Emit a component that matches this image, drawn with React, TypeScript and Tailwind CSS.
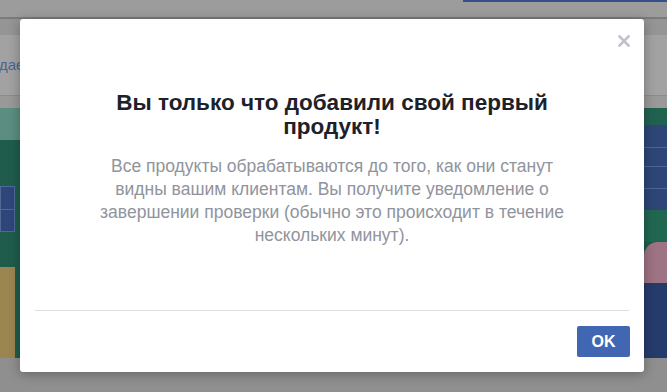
import React from "react";

const font = { fontFamily: '"Liberation Sans", Arial, sans-serif' };

function CloseIcon() {
  return (
    <svg width="12" height="12" viewBox="0 0 12 12" fill="none">
      <path d="M1.5 1.5l9 9M10.5 1.5l-9 9" stroke="#bec2c9" strokeWidth="2.6" strokeLinecap="square" />
    </svg>
  );
}

export default function App() {
  return (
    <div className="relative w-[667px] h-[392px] overflow-hidden bg-[#8f8f8f]" style={font}>
      {/* dimmed page behind the dialog */}
      <div className="flex flex-col">
        <div className="flex h-[17px] bg-[#9c9c9c]">
          <div className="w-[463px]" />
          <div className="flex-1 border-t-2 border-[#34518d]" />
        </div>
        <div className="h-[2px] bg-[#7b7b7b]" />
        <div className="h-[16px] bg-[#959595]" />
        <div className="h-[60px] bg-[#a2a2a2] flex items-center">
          <span className="-ml-[1px] text-[15px] text-[#4b6494] whitespace-nowrap">дает</span>
        </div>
        <div className="h-px bg-[#8c8c8c]" />
        <div className="h-[12px] bg-[#999999]" />

        <div className="flex h-[250px] bg-[#1f5c4c]">
          {/* left strip */}
          <div className="w-[20px] flex flex-col">
            <div className="h-[32px] bg-[#5b8e80]" />
            <div className="h-[46px]" />
            <div className="flex h-[46px]">
              <div className="w-[15px] bg-[#2e4679] border border-[#4e6898] flex flex-col">
                <div className="flex-1" />
                <div className="h-px bg-[#4e6898]" />
                <div className="flex-1" />
              </div>
            </div>
            <div className="h-[35px]" />
            <div className="flex h-[91px]">
              <div className="w-[15px] bg-[#9b8652]" />
            </div>
          </div>

          <div className="flex-1 bg-[#2a4a6a]" />

          {/* right strip */}
          <div className="w-[23px] flex flex-col">
            <div className="h-[17px] bg-[#216150]" />
            <div className="h-[85px] bg-[#2d4677] flex flex-col">
              <div className="h-[22px]" />
              <div className="h-px bg-[#4d6799]" />
              <div className="h-[18px]" />
              <div className="h-px bg-[#4d6799]" />
              <div className="h-[21px]" />
              <div className="h-px bg-[#4d6799]" />
            </div>
            <div className="h-[32px] bg-[#216650]" />
            <div className="h-[41px] bg-[#9e7383] rounded-tl-[14px]" />
            <div className="h-[75px] bg-[#253b6b]" />
          </div>
        </div>
      </div>

      {/* dialog */}
      <div className="absolute left-[20px] top-[19px] w-[624px] h-[353px] bg-white rounded-[3px] shadow-[0_2px_12px_rgba(0,0,0,0.3)] flex flex-col">
        <div className="flex justify-end pt-[16px] pr-[14px] h-[28px]">
          <button className="w-[12px] h-[12px] flex items-center justify-center">
            <CloseIcon />
          </button>
        </div>

        <div className="px-[74px] pt-[44px] text-center">
          <h2 className="text-[22.5px] leading-[24px] font-bold text-[#1d2129]">
            Вы только что добавили свой первый продукт!
          </h2>
          <p className="mt-[16px] text-[17.5px] leading-[23px] text-[#90949c]">
            Все продукты обрабатываются до того, как они станут видны вашим клиентам. Вы получите уведомление о
            завершении проверки (обычно это происходит в течение нескольких минут).
          </p>
        </div>

        <div className="flex-1" />

        <div className="mx-[15px] border-t border-[#dddfe2]" />
        <div className="flex justify-end px-[14px] pt-[15px] pb-[15px]">
          <button className="h-[31px] w-[53px] rounded-[2px] bg-[#4267b2] text-white text-[16px] font-bold">
            OK
          </button>
        </div>
      </div>
    </div>
  );
}
